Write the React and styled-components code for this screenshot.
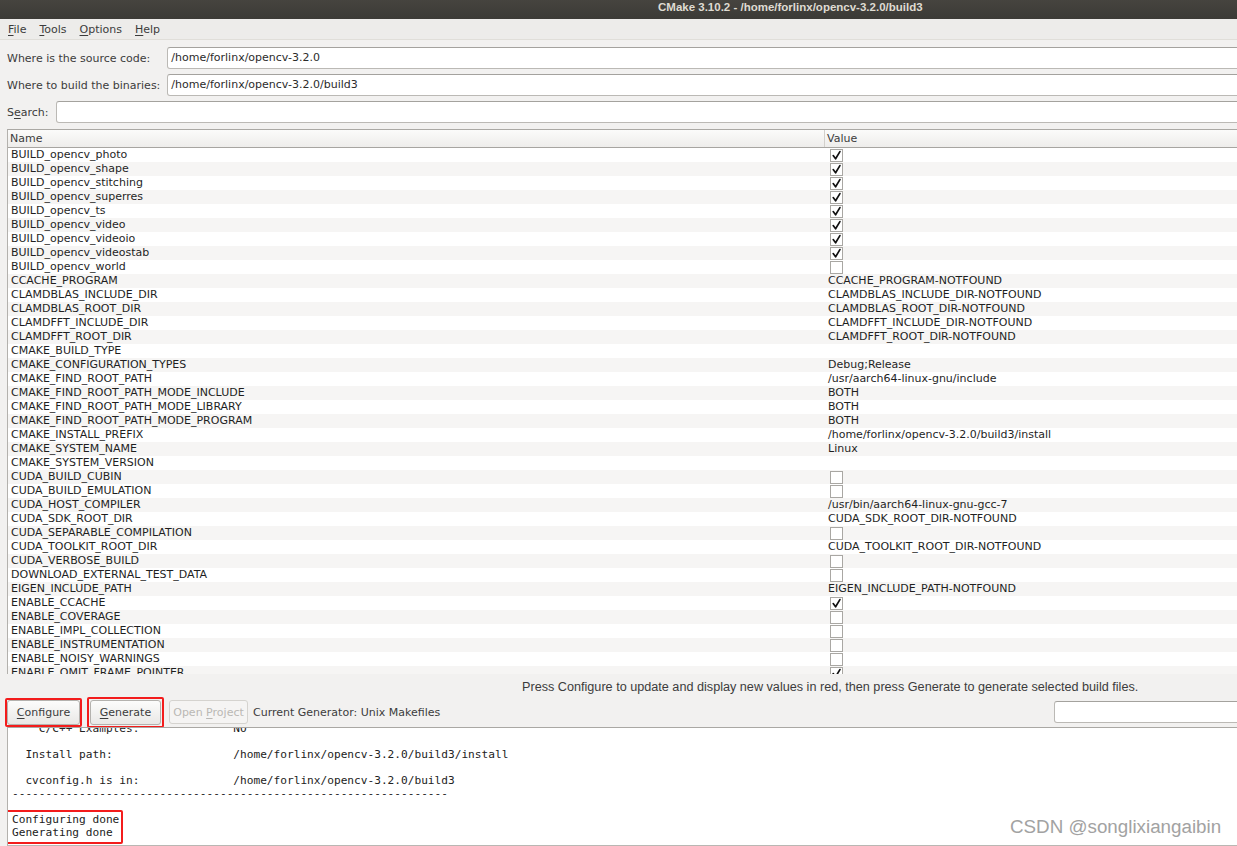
import React from 'react';
import styled, { createGlobalStyle } from 'styled-components';

const GlobalStyle = createGlobalStyle`
  html, body { margin: 0; padding: 0; overflow: hidden; background: #f2f1f0; }
  #root { width: 1237px; height: 846px; }
`;

const Screen = styled.div`
  position: relative;
  width: 1237px;
  height: 846px;
  overflow: hidden;
  font-family: "DejaVu Sans", sans-serif;
  font-size: 11px;
  color: #3c3c3c;
`;

const Window = styled.div`
  width: 1262px;
  height: 846px;
  display: flex;
  flex-direction: column;
  background: #f2f1f0;
`;

const TitleBar = styled.div`
  flex: none;
  height: 19px;
  box-sizing: border-box;
  background: linear-gradient(#46443f, #3b3a36);
  color: #dfdbd2;
  font-family: "Liberation Sans", sans-serif;
  font-weight: bold;
  font-size: 11.5px;
  line-height: 15px;
  padding-left: 658px;
  white-space: nowrap;
`;

const MenuBar = styled.div`
  flex: none;
  height: 20px;
  display: flex;
  align-items: center;
  padding-left: 1.5px;
  background: #edecea;
  border-bottom: 1px solid #e0ded9;
`;

const MenuItem = styled.span`
  padding: 0 6.5px;
  color: #3c3c3c;
`;

const Mn = styled.span`
  text-decoration: underline;
  text-underline-offset: 2px;
`;

const Form = styled.div`
  flex: none;
  display: flex;
  flex-direction: column;
  gap: 5px;
  padding: 7px 0 0 7px;
`;

const PathGrid = styled.div`
  display: grid;
  grid-template-columns: max-content 1fr;
  column-gap: 7px;
  row-gap: 5px;
  align-items: center;
`;

const Label = styled.span`
  color: #3c3c3c;
  white-space: nowrap;
`;

const Field = styled.div`
  height: 22px;
  box-sizing: border-box;
  background: #fff;
  border: 1px solid #bbb9b5;
  border-top-color: #a4a29e;
  border-radius: 3px;
  padding: 0 3px;
  line-height: 20px;
  color: #2b2b2b;
  white-space: nowrap;
  flex: ${p => (p.$grow ? 1 : 'none')};
  width: ${p => (p.$w ? `${p.$w}px` : 'auto')};
`;

const SearchRow = styled.div`
  display: flex;
  align-items: center;
  gap: 7px;
`;

const Table = styled.div`
  flex: none;
  margin: 6px 0 0 7px;
  border-top: 1px solid #aaa8a4;
  border-left: 1px solid #b3b1ad;
  background: #fff;
  display: flex;
  flex-direction: column;
`;

const Header = styled.div`
  display: grid;
  grid-template-columns: 816px 1fr;
  height: 17px;
  line-height: 17px;
  background: linear-gradient(#fbfbfa, #eeedeb);
  border-bottom: 1px solid #a7a5a1;
`;

const HeaderCell = styled.div`
  padding-left: 2px;
  color: #3c3c3c;
  border-left: ${p => (p.$divider ? '1px solid #d2d0cc' : 'none')};
`;

const Body = styled.div`
  height: 526px;
  overflow: hidden;
`;

const Row = styled.div`
  display: grid;
  grid-template-columns: 816px 1fr;
  height: 14px;
  line-height: 14px;
  background: ${p => (p.$alt ? '#f6f5f4' : '#ffffff')};
  color: #1f1f1f;
`;

const NameCell = styled.div`
  padding-left: 3px;
  white-space: nowrap;
`;

const ValueCell = styled.div`
  padding-left: 4px;
  display: flex;
  align-items: center;
  white-space: nowrap;
`;

const Box = styled.span`
  width: 13px;
  height: 13px;
  box-sizing: border-box;
  margin-left: 2px;
  border: 1px solid #a9a7a3;
  background: #fff;
  display: flex;
  align-items: center;
  justify-content: center;
`;

const CheckBox = ({ checked }) => (
  <Box>
    {checked && (
      <svg width="11" height="11" viewBox="0 0 11 11">
        <path d="M2.2 5.6 L4.6 8.8 L8.9 1.6" fill="none" stroke="#111" strokeWidth="1.7" strokeLinecap="round" strokeLinejoin="round" />
      </svg>
    )}
  </Box>
);

const Hint = styled.div`
  flex: none;
  height: 23px;
  box-sizing: border-box;
  padding: 6px 0 0 522px;
  line-height: 14px;
  font-family: "Liberation Sans", sans-serif;
  font-size: 12.65px;
  color: #3c3c3c;
  white-space: nowrap;
`;

const ButtonRow = styled.div`
  flex: none;
  height: 30px;
  display: flex;
  align-items: center;
  gap: 5px;
  padding-left: 5px;
`;

const Highlight = styled.div`
  border: 2px solid #f31c1c;
  border-radius: 2px;
  padding: ${p => p.$pad || '0'};
  display: flex;
`;

const Button = styled.div`
  width: ${p => p.$w}px;
  height: ${p => p.$h || 25}px;
  box-sizing: border-box;
  border: 1px solid ${p => (p.$disabled ? '#d5d3cf' : '#b4b2ae')};
  border-radius: 3px;
  background: ${p => (p.$disabled ? '#f5f4f3' : 'linear-gradient(#fcfcfb, #e9e8e6)')};
  color: ${p => (p.$disabled ? '#bab8b4' : '#3c3c3c')};
  display: flex;
  align-items: center;
  justify-content: center;
  white-space: nowrap;
`;

const Spacer = styled.div`
  flex: 1;
`;

const Output = styled.div`
  flex: none;
  height: 119px;
  box-sizing: border-box;
  margin-left: 7px;
  border-top: 1px solid #aaa8a4;
  border-left: 1px solid #b3b1ad;
  border-bottom: 1px solid #b9b7b3;
  background: #fff;
  overflow: hidden;
`;

const Pre = styled.div`
  margin: -6px 0 0 0;
  padding-left: 4px;
  font-family: "DejaVu Sans Mono", monospace;
  font-size: 11.15px;
  line-height: 13px;
  color: #222;
  white-space: pre;
`;

const OutHighlight = styled.div`
  width: fit-content;
  border: 2px solid #f31c1c;
  border-radius: 2px;
  padding: 1.5px 2px 2.5px 5px;
  margin: -3.5px 0 0 -7px;
`;

const Watermark = styled.div`
  position: absolute;
  left: 1010px;
  top: 816px;
  font-family: "Liberation Sans", sans-serif;
  font-size: 18.8px;
  line-height: 22px;
  color: #a2a2a2;
  white-space: nowrap;
`;

const rows = [
  ['BUILD_opencv_photo', true],
  ['BUILD_opencv_shape', true],
  ['BUILD_opencv_stitching', true],
  ['BUILD_opencv_superres', true],
  ['BUILD_opencv_ts', true],
  ['BUILD_opencv_video', true],
  ['BUILD_opencv_videoio', true],
  ['BUILD_opencv_videostab', true],
  ['BUILD_opencv_world', false],
  ['CCACHE_PROGRAM', 'CCACHE_PROGRAM-NOTFOUND'],
  ['CLAMDBLAS_INCLUDE_DIR', 'CLAMDBLAS_INCLUDE_DIR-NOTFOUND'],
  ['CLAMDBLAS_ROOT_DIR', 'CLAMDBLAS_ROOT_DIR-NOTFOUND'],
  ['CLAMDFFT_INCLUDE_DIR', 'CLAMDFFT_INCLUDE_DIR-NOTFOUND'],
  ['CLAMDFFT_ROOT_DIR', 'CLAMDFFT_ROOT_DIR-NOTFOUND'],
  ['CMAKE_BUILD_TYPE', ''],
  ['CMAKE_CONFIGURATION_TYPES', 'Debug;Release'],
  ['CMAKE_FIND_ROOT_PATH', '/usr/aarch64-linux-gnu/include'],
  ['CMAKE_FIND_ROOT_PATH_MODE_INCLUDE', 'BOTH'],
  ['CMAKE_FIND_ROOT_PATH_MODE_LIBRARY', 'BOTH'],
  ['CMAKE_FIND_ROOT_PATH_MODE_PROGRAM', 'BOTH'],
  ['CMAKE_INSTALL_PREFIX', '/home/forlinx/opencv-3.2.0/build3/install'],
  ['CMAKE_SYSTEM_NAME', 'Linux'],
  ['CMAKE_SYSTEM_VERSION', ''],
  ['CUDA_BUILD_CUBIN', false],
  ['CUDA_BUILD_EMULATION', false],
  ['CUDA_HOST_COMPILER', '/usr/bin/aarch64-linux-gnu-gcc-7'],
  ['CUDA_SDK_ROOT_DIR', 'CUDA_SDK_ROOT_DIR-NOTFOUND'],
  ['CUDA_SEPARABLE_COMPILATION', false],
  ['CUDA_TOOLKIT_ROOT_DIR', 'CUDA_TOOLKIT_ROOT_DIR-NOTFOUND'],
  ['CUDA_VERBOSE_BUILD', false],
  ['DOWNLOAD_EXTERNAL_TEST_DATA', false],
  ['EIGEN_INCLUDE_PATH', 'EIGEN_INCLUDE_PATH-NOTFOUND'],
  ['ENABLE_CCACHE', true],
  ['ENABLE_COVERAGE', false],
  ['ENABLE_IMPL_COLLECTION', false],
  ['ENABLE_INSTRUMENTATION', false],
  ['ENABLE_NOISY_WARNINGS', false],
  ['ENABLE_OMIT_FRAME_POINTER', true],
];

const pad = (s, n) => s + ' '.repeat(Math.max(0, n - s.length));

const outLines = [
  pad('    C/C++ Examples:', 33) + 'NO',
  '',
  pad('  Install path:', 33) + '/home/forlinx/opencv-3.2.0/build3/install',
  '',
  pad('  cvconfig.h is in:', 33) + '/home/forlinx/opencv-3.2.0/build3',
  '-'.repeat(65),
  '',
].join('\n');

export default function App() {
  return (
    <Screen>
      <GlobalStyle />
      <Window>
        <TitleBar>CMake 3.10.2 - /home/forlinx/opencv-3.2.0/build3</TitleBar>
        <MenuBar>
          <MenuItem><Mn>F</Mn>ile</MenuItem>
          <MenuItem><Mn>T</Mn>ools</MenuItem>
          <MenuItem><Mn>O</Mn>ptions</MenuItem>
          <MenuItem><Mn>H</Mn>elp</MenuItem>
        </MenuBar>
        <Form>
          <PathGrid>
            <Label>Where is the source code:</Label>
            <Field>/home/forlinx/opencv-3.2.0</Field>
            <Label>Where to build the binaries:</Label>
            <Field>/home/forlinx/opencv-3.2.0/build3</Field>
          </PathGrid>
          <SearchRow>
            <Label>S<Mn>e</Mn>arch:</Label>
            <Field $grow />
          </SearchRow>
        </Form>
        <Table>
          <Header>
            <HeaderCell>Name</HeaderCell>
            <HeaderCell $divider>Value</HeaderCell>
          </Header>
          <Body>
            {rows.map(([name, value], i) => (
              <Row key={name} $alt={i % 2 === 1}>
                <NameCell>{name}</NameCell>
                <ValueCell>
                  {typeof value === 'boolean' ? <CheckBox checked={value} /> : value}
                </ValueCell>
              </Row>
            ))}
          </Body>
        </Table>
        <Hint>Press Configure to update and display new values in red, then press Generate to generate selected build files.</Hint>
        <ButtonRow>
          <Highlight>
            <Button $w={73}><span><Mn>C</Mn>onfigure</span></Button>
          </Highlight>
          <Highlight $pad="1px">
            <Button $w={71}><span><Mn>G</Mn>enerate</span></Button>
          </Highlight>
          <Button $w={79} $h={24} $disabled><span>Open <Mn>P</Mn>roject</span></Button>
          <Label>Current Generator: Unix Makefiles</Label>
          <Spacer />
          <Field $w={208} />
        </ButtonRow>
        <Output>
          <Pre>
            {outLines}
            {'\n'}
            <OutHighlight>{'Configuring done\nGenerating done'}</OutHighlight>
          </Pre>
        </Output>
      </Window>
      <Watermark>CSDN @songlixiangaibin</Watermark>
    </Screen>
  );
}
